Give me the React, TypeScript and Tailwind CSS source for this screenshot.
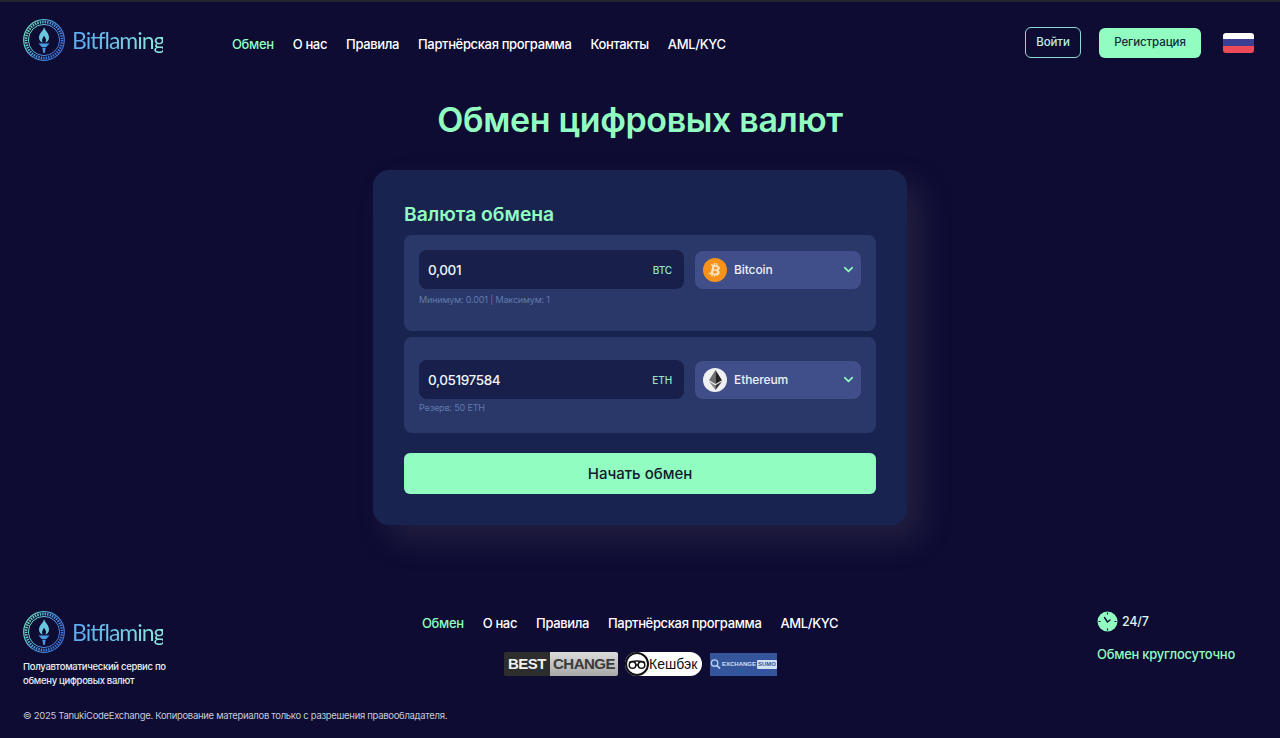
import { ChevronDown } from "lucide-react";
import { FaBtc } from "react-icons/fa";

const headerLinks = ["О нас", "Правила", "Партнёрская программа", "Контакты", "AML/KYC"];
const footerLinks = ["О нас", "Правила", "Партнёрская программа", "AML/KYC"];

const Logo = ({ id, className }: { id: string; className?: string }) => (
  <div className={`flex items-center gap-[7px] ${className ?? ""}`}>
    <svg width="42" height="42" viewBox="0 0 42 42" fill="none">
      <defs>
        <linearGradient id={id} x1="0" y1="0.3" x2="1" y2="0.8">
          <stop offset="0" stopColor="#6fe0c0" />
          <stop offset="0.5" stopColor="#4a9be6" />
          <stop offset="1" stopColor="#3f6fd6" />
        </linearGradient>
      </defs>
      <circle cx="21" cy="21" r="20.3" stroke={`url(#${id})`} strokeWidth="1.2" />
      <circle cx="21" cy="21" r="18" stroke={`url(#${id})`} strokeWidth="2.6" strokeDasharray="1.4 1.1" />
      <circle cx="21" cy="21" r="15.6" stroke={`url(#${id})`} strokeWidth="1" />
      <path d="M21 8c1 3.500 5 6 5 10.500 0 2.500-1.500 4.500-3.500 5.300 1-2.300.500-4.500-1.500-7-1.500 2.200-2.600 4.500-1.400 7-2.200-.800-3.600-2.800-3.600-5.300C16 14 20.500 12 21 8Z" fill="#69c6dc" />
      <path d="M15.500 24.500h11l-3.300 3.500H18.800l-3.300-3.500Z" fill="#4a9be6" />
      <path d="M19.300 28.800h3.400l-1 5.200h-1.400l-1-5.200Z" fill="#4a9be6" />
    </svg>
    <span className="w-[91px] bg-gradient-to-r from-[#5aa9ee] to-[#8ce8dc] bg-clip-text font-['Lato'] text-[23px] leading-[32px] font-normal tracking-[-1px] text-transparent">
      Bitflaming
    </span>
  </div>
);

const EthIcon = () => (
  <div className="flex h-[24px] w-[24px] items-center justify-center rounded-full bg-[#eef0f2]">
    <svg width="13" height="20" viewBox="0 0 13 20">
      <path d="M6.500 0 0 10.200l6.500 3.800Z" fill="#6f6f6f" />
      <path d="M6.500 0 13 10.200 6.500 14Z" fill="#232323" />
      <path d="M0 11.500 6.500 20v-4.700Z" fill="#8a8a8a" />
      <path d="M13 11.500 6.500 20v-4.700Z" fill="#303030" />
    </svg>
  </div>
);

const BtcIcon = () => (
  <div className="flex h-[24px] w-[24px] items-center justify-center rounded-full bg-[#f7931a]">
    <FaBtc className="rotate-12 text-[14px] text-[#fbe3c2]" />
  </div>
);

const ExchangeRow = ({
  value,
  unit,
  name,
  icon,
  hint,
  className,
  hintClassName,
}: {
  value: string;
  unit: string;
  name: string;
  icon: React.ReactNode;
  hint: string;
  className: string;
  hintClassName: string;
}) => (
  <div className={`rounded-lg bg-[#2a3769] px-[15px] ${className}`}>
    <div className="flex items-center gap-[11px]">
      <div className="flex h-[39px] w-[265px] items-center justify-between rounded-lg bg-[#171f4a] pt-[1px] pr-[12px] pl-[9px]">
        <span className="text-[13.500px] font-medium tracking-[-0.4px] text-[#f2f5f8]">{value}</span>
        <span className="text-[10px] font-medium tracking-[-0.1px] text-[#8fe8c4]">{unit}</span>
      </div>
      <div className="flex h-[38px] w-[166px] items-center rounded-lg bg-[#404f8a] pr-[5px] pl-[8px]">
        {icon}
        <span className="ml-[7px] text-[12px] font-medium tracking-[-0.1px] text-[#eef1f6]">{name}</span>
        <ChevronDown className="ml-auto h-[15px] w-[15px] text-[#92fdc0]" strokeWidth={2.5} />
      </div>
    </div>
    <p className={`text-[9px] leading-[14px] tracking-[-0.15px] text-[#607aae] ${hintClassName}`}>{hint}</p>
  </div>
);

const App = () => {
  return (
    <div className="h-[738px] overflow-hidden border-t-2 border-[#26262e] bg-[#0e0c33] font-['Inter',sans-serif] text-white">
      {/* header */}
      <header className="flex h-[83px] items-center pr-[26px] pl-[23px]">
        <Logo id="logo-top" className="mb-[8px]" />
        <nav className="mt-[2px] ml-[69px] flex items-center gap-[19px] text-[13px] font-medium tracking-[-0.35px]">
          <a className="text-[#92fdc0]">Обмен</a>
          {headerLinks.map((l) => (
            <a key={l}>{l}</a>
          ))}
        </nav>
        <div className="ml-auto flex items-center pb-[2px]">
          <button className="h-[31px] w-[56px] rounded-md border border-[#8fd8d0] pt-[1px] text-[11.500px] font-medium tracking-[-0.1px] text-[#bfeee0]">Войти</button>
          <button className="ml-[18px] h-[30px] w-[102px] rounded-md bg-[#92fdc0] pt-[1px] text-[11.500px] font-medium tracking-[-0.1px] text-[#0f2a3a]">Регистрация</button>
          <div className="ml-[22px] flex h-[20px] w-[31px] flex-col overflow-hidden rounded-[3px]">
            <div className="flex-1 bg-white" />
            <div className="flex-1 bg-[#3c3f93]" />
            <div className="flex-1 bg-[#ee4b5a]" />
          </div>
        </div>
      </header>

      {/* main */}
      <main className="flex flex-col items-center">
        <h1 className="mt-[14px] text-center text-[34px] leading-[42px] font-semibold tracking-[-0.35px] text-[#92fdc0]">Обмен цифровых валют</h1>
        <section className="mt-[29px] h-[355px] w-[534px] rounded-[16px] bg-[#18244f] px-[31px] pt-[29px] shadow-[15px_15px_30px_rgba(80,75,95,0.3)]">
          <h2 className="text-[19.300px] leading-[30px] font-semibold text-[#92fdc0]">Валюта обмена</h2>
          <ExchangeRow
            className="mt-[6px] h-[96px] pt-[15px]"
            hintClassName="mt-[4px]"
            value="0,001"
            unit="BTC"
            name="Bitcoin"
            icon={<BtcIcon />}
            hint="Минимум: 0.001 | Максимум: 1"
          />
          <ExchangeRow
            className="mt-[6px] h-[96px] pt-[23px]"
            hintClassName="mt-[2px]"
            value="0,05197584"
            unit="ETH"
            name="Ethereum"
            icon={<EthIcon />}
            hint="Резерв: 50 ETH"
          />
          <button className="mt-[20px] h-[41px] w-full rounded-md bg-[#92fdc0] pt-[2px] text-[15px] font-medium text-[#0f1a2a]">Начать обмен</button>
        </section>
      </main>

      {/* footer */}
      <footer className="mt-[86px] pr-[45px] pl-[23px]">
        <div className="flex">
          <div className="w-[399px]">
            <Logo id="logo-bottom" />
            <p className="mt-[7px] text-[9.500px] leading-[14px] font-medium tracking-[-0.3px] text-[#e8ecf2]">
              Полуавтоматический сервис по
              <br />
              обмену цифровых валют
            </p>
          </div>
          <div>
            <nav className="mt-[2px] flex items-center gap-[19px] text-[13px] leading-[20px] font-medium tracking-[-0.35px]">
              <a className="text-[#92fdc0]">Обмен</a>
              {footerLinks.map((l) => (
                <a key={l}>{l}</a>
              ))}
            </nav>
            <div className="mt-[19px] ml-[82px] flex items-center gap-[7px]">
              <div className="flex h-[24px] w-[114px] overflow-hidden rounded-[2px] font-['Liberation_Sans',sans-serif] text-[15px] leading-[24px] font-bold tracking-[-0.5px]">
                <span className="w-[46px] bg-[#2d2d2d] text-center text-[#f2f2f2]">BEST</span>
                <span className="flex-1 bg-gradient-to-b from-[#dcdcdc] to-[#a8a8a8] text-center text-[#3b3b3b]">CHANGE</span>
              </div>
              <div className="flex h-[24px] w-[77px] items-center rounded-full bg-white">
                <svg width="24" height="24" viewBox="0 0 24 24" fill="none">
                  <circle cx="12" cy="12" r="11" fill="#fff" stroke="#111" strokeWidth="2" />
                  <circle cx="7.500" cy="13" r="3.300" stroke="#111" strokeWidth="1.500" />
                  <circle cx="16.500" cy="13" r="3.300" stroke="#111" strokeWidth="1.500" />
                  <path d="M4 10.500c3-2 13-2 16 0M10.800 13h2.400" stroke="#111" strokeWidth="1.300" />
                </svg>
                <span className="font-['Liberation_Sans',sans-serif] text-[14px] text-[#111]">Кешбэк</span>
              </div>
              <div className="ml-[1px] flex h-[23px] w-[67px] items-center justify-center gap-[1px] bg-[#34559b]">
                <svg width="12" height="12" viewBox="0 0 12 12" fill="none">
                  <circle cx="5" cy="5" r="3.500" stroke="#b5d0f2" strokeWidth="1.500" />
                  <path d="m7.500 7.500 3.500 3.500" stroke="#b5d0f2" strokeWidth="1.800" />
                </svg>
                <span className="font-['Liberation_Sans',sans-serif] text-[6px] font-bold text-[#cfe0f5]">EXCHANGE</span>
                <span className="rounded-[1px] bg-[#cfe0f5] px-[1px] font-['Liberation_Sans',sans-serif] text-[6px] leading-[9px] font-bold text-[#34559b]">SUMO</span>
              </div>
            </div>
          </div>
          <div className="ml-auto">
            <div className="flex items-center gap-[4px]">
              <svg width="21" height="21" viewBox="0 0 21 21" fill="none">
                <circle cx="10.500" cy="10.500" r="10" fill="#92fdc0" />
                <path d="M10.500 11 7.500 6.500M10.500 11l2.500-2" stroke="#0e0c33" strokeWidth="1.400" strokeLinecap="round" />
                <path d="M10.500 1.500v2M10.500 17.500v2M1.500 10.500h2M17.500 10.500h2" stroke="#0e0c33" strokeWidth="1.200" />
              </svg>
              <span className="pt-[1px] text-[12.500px] font-medium tracking-[-0.2px] text-[#dff5ec]">24/7</span>
            </div>
            <p className="mt-[12px] text-[13px] leading-[20px] font-medium tracking-[-0.25px] text-[#92fdc0]">Обмен круглосуточно</p>
          </div>
        </div>
        <p className="mt-[21px] text-[9.500px] leading-[14px] tracking-[-0.3px] text-[#c4cad8]">
          © 2025 TanukiCodeExchange. Копирование материалов только с разрешения правообладателя.
        </p>
      </footer>
    </div>
  );
};

export default App;
